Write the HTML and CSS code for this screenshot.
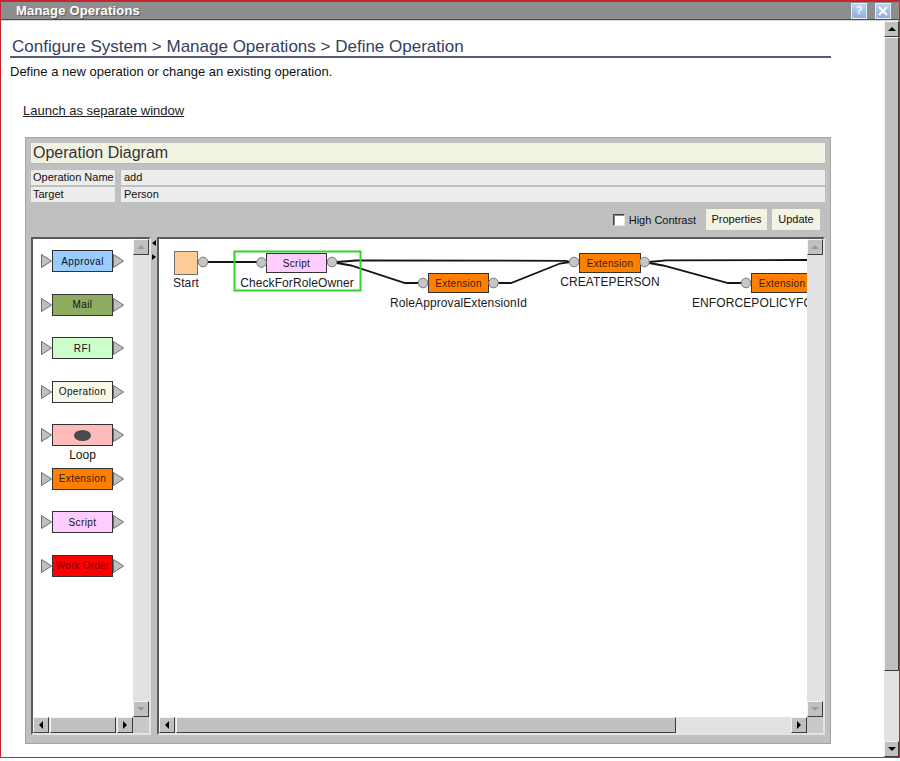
FILE: index.html
```html
<!DOCTYPE html>
<html>
<head>
<meta charset="utf-8">
<title>Manage Operations</title>
<link rel="stylesheet" href="styles.css">
</head>
<body>
<div class="window">
  <div class="titlebar">
    <span class="title">Manage Operations</span>
    <div class="tb-buttons">
      <span class="tb-btn">?</span>
      <span class="tb-btn"><svg width="10" height="10" viewBox="0 0 10 10"><path d="M1 1L9 9M9 1L1 9" stroke="#fff" stroke-width="2"/></svg></span>
    </div>
  </div>
  <div class="client">
    <div class="page">
      <h1 class="crumb">Configure System &gt; Manage Operations &gt; Define Operation</h1>
      <p class="desc">Define a new operation or change an existing operation.</p>
      <div class="launch-row"><a class="launch" href="#">Launch as separate window</a></div>
      <div class="applet">
        <div class="applet-title">Operation Diagram</div>
        <div class="prop-row"><div class="prop-label">Operation Name</div><div class="prop-value">add</div></div>
        <div class="prop-row gap2"><div class="prop-label">Target</div><div class="prop-value">Person</div></div>
        <div class="toolbar">
          <label class="hc"><span class="checkbox"></span>High Contrast</label>
          <span class="btn w61">Properties</span>
          <span class="btn w48">Update</span>
        </div>
        <div class="split">
          <div class="frame palette-frame">
            <div class="frame-body">
              <div class="view palette">
                <div class="pslot"><div class="pnode"><svg class="tri" width="11" height="14" viewBox="0 0 11 14"><path d="M0.5 0.5L10.5 7L0.5 13.5Z"/></svg><div class="pbox c-approval">Approval</div><svg class="tri" width="11" height="14" viewBox="0 0 11 14"><path d="M0.5 0.5L10.5 7L0.5 13.5Z"/></svg></div></div>
                <div class="pslot"><div class="pnode"><svg class="tri" width="11" height="14" viewBox="0 0 11 14"><path d="M0.5 0.5L10.5 7L0.5 13.5Z"/></svg><div class="pbox c-mail">Mail</div><svg class="tri" width="11" height="14" viewBox="0 0 11 14"><path d="M0.5 0.5L10.5 7L0.5 13.5Z"/></svg></div></div>
                <div class="pslot"><div class="pnode"><svg class="tri" width="11" height="14" viewBox="0 0 11 14"><path d="M0.5 0.5L10.5 7L0.5 13.5Z"/></svg><div class="pbox c-rfi">RFI</div><svg class="tri" width="11" height="14" viewBox="0 0 11 14"><path d="M0.5 0.5L10.5 7L0.5 13.5Z"/></svg></div></div>
                <div class="pslot"><div class="pnode"><svg class="tri" width="11" height="14" viewBox="0 0 11 14"><path d="M0.5 0.5L10.5 7L0.5 13.5Z"/></svg><div class="pbox c-operation">Operation</div><svg class="tri" width="11" height="14" viewBox="0 0 11 14"><path d="M0.5 0.5L10.5 7L0.5 13.5Z"/></svg></div></div>
                <div class="pslot"><div class="pnode"><svg class="tri" width="11" height="14" viewBox="0 0 11 14"><path d="M0.5 0.5L10.5 7L0.5 13.5Z"/></svg><div class="pbox c-loop"><span class="loop-dot"></span></div><svg class="tri" width="11" height="14" viewBox="0 0 11 14"><path d="M0.5 0.5L10.5 7L0.5 13.5Z"/></svg></div><div class="loop-label">Loop</div></div>
                <div class="pslot"><div class="pnode"><svg class="tri" width="11" height="14" viewBox="0 0 11 14"><path d="M0.5 0.5L10.5 7L0.5 13.5Z"/></svg><div class="pbox c-extension">Extension</div><svg class="tri" width="11" height="14" viewBox="0 0 11 14"><path d="M0.5 0.5L10.5 7L0.5 13.5Z"/></svg></div></div>
                <div class="pslot"><div class="pnode"><svg class="tri" width="11" height="14" viewBox="0 0 11 14"><path d="M0.5 0.5L10.5 7L0.5 13.5Z"/></svg><div class="pbox c-script">Script</div><svg class="tri" width="11" height="14" viewBox="0 0 11 14"><path d="M0.5 0.5L10.5 7L0.5 13.5Z"/></svg></div></div>
                <div class="pslot"><div class="pnode"><svg class="tri" width="11" height="14" viewBox="0 0 11 14"><path d="M0.5 0.5L10.5 7L0.5 13.5Z"/></svg><div class="pbox c-workorder">Work Order</div><svg class="tri" width="11" height="14" viewBox="0 0 11 14"><path d="M0.5 0.5L10.5 7L0.5 13.5Z"/></svg></div></div>
              </div>
              <div class="sbv">
                <div class="sbbtn"><span class="arr up dis"></span></div>
                <div class="track"></div>
                <div class="sbbtn"><span class="arr down dis"></span></div>
              </div>
            </div>
            <div class="frame-foot">
              <div class="sbh">
                <div class="sbbtn"><span class="arr left"></span></div>
                <div class="track h"><div class="thumb pal-thumb"></div></div>
                <div class="sbbtn"><span class="arr right"></span></div>
              </div>
              <div class="corner"></div>
            </div>
          </div>
          <div class="divider">
            <span class="darr dl"></span>
            <span class="darr dr"></span>
          </div>
          <div class="frame diagram-frame">
            <div class="frame-body">
              <div class="view canvas">
                <svg class="diagram" width="648" height="478" viewBox="159 238 648 478">
                  <g class="wires">
                    <path d="M208 261H257"/>
                    <path d="M337 261L356 259.5L566 259.8L570 261"/>
                    <path d="M337 262L351 264.5L405 282H419"/>
                    <path d="M498 282H511L560 262.5L570 261"/>
                    <path d="M649 261L666 259.3L808 259"/>
                    <path d="M649 262L663 264.5L728 282H742"/>
                  </g>
                  <rect class="sel" x="234.5" y="250.5" width="126" height="39"/>
                  <rect class="n-start" x="174.5" y="250.5" width="23" height="23"/>
                  <rect class="node n-script" x="266.5" y="252.5" width="60" height="19"/>
                  <rect class="node n-ext" x="428.5" y="272.5" width="60" height="19"/>
                  <rect class="node n-ext" x="579.5" y="252.5" width="61" height="19"/>
                  <rect class="node n-ext" x="751.5" y="272.5" width="61" height="19"/>
                  <g class="ports">
                    <circle cx="203" cy="261" r="4.8"/>
                    <circle cx="261.5" cy="261.5" r="4.8"/>
                    <circle cx="332" cy="261" r="4.8"/>
                    <circle cx="423" cy="282" r="4.8"/>
                    <circle cx="493.5" cy="282" r="4.8"/>
                    <circle cx="574" cy="261" r="4.8"/>
                    <circle cx="644.5" cy="261" r="4.8"/>
                    <circle cx="746" cy="282" r="4.8"/>
                  </g>
                  <text class="ntext" x="296.5" y="265.5">Script</text>
                  <text class="ntext ext" x="458.5" y="285.5">Extension</text>
                  <text class="ntext ext" x="610" y="265.5">Extension</text>
                  <text class="ntext ext" x="782" y="285.5">Extension</text>
                  <text class="lbl" x="186" y="286">Start</text>
                  <text class="lbl" x="297" y="286">CheckForRoleOwner</text>
                  <text class="lbl" x="458.5" y="306">RoleApprovalExtensionId</text>
                  <text class="lbl" x="610" y="285">CREATEPERSON</text>
                  <text class="lbl start" x="692" y="306">ENFORCEPOLICYFORPERSON</text>
                </svg>
              </div>
              <div class="sbv">
                <div class="sbbtn"><span class="arr up dis"></span></div>
                <div class="track"></div>
                <div class="sbbtn"><span class="arr down dis"></span></div>
              </div>
            </div>
            <div class="frame-foot">
              <div class="sbh">
                <div class="sbbtn"><span class="arr left"></span></div>
                <div class="track h"><div class="thumb dia-thumb"></div></div>
                <div class="sbbtn"><span class="arr right"></span></div>
              </div>
              <div class="corner"></div>
            </div>
          </div>
        </div>
      </div>
    </div>
    <div class="sbv page-sb">
      <div class="sbbtn"><span class="arr up"></span></div>
      <div class="track"><div class="thumb page-thumb"></div></div>
      <div class="sbbtn"><span class="arr down"></span></div>
    </div>
  </div>
</div>
</body>
</html>
```

FILE: styles.css
```css
* { box-sizing: border-box; }
html, body { margin: 0; padding: 0; background: #fff; }
body {
  width: 900px;
  height: 761px;
  overflow: hidden;
  font-family: "Liberation Sans", Arial, sans-serif;
  color: #111;
}

.window {
  width: 900px;
  height: 758px;
  border: 1px solid #c4262e;
  border-top-width: 2px;
  display: flex;
  flex-direction: column;
}

.titlebar {
  flex: none;
  height: 18px;
  background: #8d8d8d;
  border-bottom: 1px solid #4c4c4c;
  display: flex;
  align-items: center;
  justify-content: space-between;
  padding: 0 8px 0 15px;
}
.title {
  color: #fff;
  font-weight: bold;
  font-size: 13px;
  letter-spacing: 0.2px;
  text-shadow: 1px 1px 0 #5c5c5c;
}
.tb-buttons { display: flex; gap: 8px; }
.tb-btn {
  width: 16px;
  height: 16px;
  background: linear-gradient(#bcd4f0, #8eaedb);
  border: 1px solid #e6eef8;
  display: flex;
  align-items: center;
  justify-content: center;
  color: #fff;
  font-weight: bold;
  font-size: 11px;
  line-height: 1;
}

.client {
  flex: 1;
  min-height: 0;
  display: flex;
  border-top: 1px solid #d6d6d6;
}
.page {
  flex: 1;
  min-width: 0;
  overflow: hidden;
  padding: 16px 0 0 9px;
}

.crumb {
  margin: 0;
  width: 821px;
  height: 21px;
  padding-left: 2px;
  font-size: 17px;
  font-weight: normal;
  line-height: 19px;
  color: #34405f;
  border-bottom: 2px solid #555b78;
}
.desc {
  margin: 6px 0 0 0;
  font-size: 13px;
  line-height: 15px;
  color: #111;
}
.launch-row { margin: 23px 0 0 13px; line-height: 15px; }
.launch {
  font-size: 13px;
  color: #222;
  text-decoration: underline;
}

/* applet */
.applet {
  margin: 19px 0 0 15px;
  width: 806px;
  height: 607px;
  background: #c0c0c0;
  border: 1px solid #a4a4a4;
  padding: 5px 5px 7px 5px;
  display: flex;
  flex-direction: column;
  font-family: "Liberation Sans", Tahoma, sans-serif;
}
.applet-title {
  height: 21px;
  background: #f3f3e3;
  border-bottom: 1px solid #b8b8b0;
  font-size: 16px;
  line-height: 20px;
  padding-left: 2px;
  color: #333;
}
.prop-row {
  margin-top: 6px;
  height: 15px;
  display: flex;
  gap: 6px;
  font-size: 11px;
  line-height: 15px;
  color: #111;
}
.prop-row.gap2 { margin-top: 2px; }
.prop-label { width: 84px; background: #ececec; padding-left: 2px; }
.prop-value { flex: 1; background: #ececec; padding-left: 3px; }

.toolbar {
  margin-top: 7px;
  height: 21px;
  display: flex;
  justify-content: flex-end;
  align-items: center;
  padding-right: 5px;
  font-size: 11px;
  color: #111;
}
.hc {
  display: flex;
  align-items: center;
  gap: 4px;
  margin-right: 10px;
}
.checkbox {
  width: 12px;
  height: 12px;
  background: #fff;
  border: 1px solid;
  border-color: #404040 #e6e6e6 #e6e6e6 #404040;
  box-shadow: inset 1px 1px 0 #8a8a8a;
}
.btn {
  height: 21px;
  line-height: 21px;
  text-align: center;
  background: #f3f3e3;
}
.btn.w61 { width: 61px; margin-right: 5px; }
.btn.w48 { width: 48px; }

.split {
  margin-top: 7px;
  height: 498px;
  display: flex;
}
.frame {
  display: flex;
  flex-direction: column;
  border: 2px solid;
  border-color: #5a5a5a #e4e4e4 #e4e4e4 #5a5a5a;
  background: #fff;
}
.palette-frame { width: 120px; }
.diagram-frame { flex: 1; }
.frame-body { flex: 1; min-height: 0; display: flex; }
.view { flex: 1; min-width: 0; overflow: hidden; background: #fff; }
.frame-foot { height: 16px; display: flex; }
.corner { width: 16px; background: #c8c8c8; }

.divider {
  width: 6px;
  display: flex;
  flex-direction: column;
  align-items: center;
  padding-top: 3px;
  gap: 8px;
}
.darr { width: 0; height: 0; border-top: 3px solid transparent; border-bottom: 3px solid transparent; }
.darr.dl { border-right: 4px solid #000; }
.darr.dr { border-left: 4px solid #000; }

/* scrollbars */
.sbv {
  width: 16px;
  flex: none;
  display: flex;
  flex-direction: column;
  background: #e2e2e2;
}
.sbh {
  flex: 1;
  display: flex;
  background: #e2e2e2;
}
.track { flex: 1; background: #e2e2e2; }
.track.h { display: flex; padding-left: 1px; }
.sbbtn {
  width: 16px;
  height: 16px;
  flex: none;
  background: #c0c0c0;
  border: 1px solid;
  border-color: #f4f4f4 #3c3c3c #3c3c3c #f4f4f4;
  display: flex;
  align-items: center;
  justify-content: center;
}
.thumb {
  background: #c0c0c0;
  border: 1px solid;
  border-color: #f4f4f4 #3c3c3c #3c3c3c #f4f4f4;
}
.pal-thumb { width: 66px; }
.dia-thumb { width: 500px; }
.page-sb { width: 15px; }
.page-sb .sbbtn { width: 15px; }
.page-thumb { height: 634px; }

.arr { width: 0; height: 0; }
.arr.up { border-left: 4px solid transparent; border-right: 4px solid transparent; border-bottom: 4px solid #000; }
.arr.down { border-left: 4px solid transparent; border-right: 4px solid transparent; border-top: 4px solid #000; }
.arr.left { border-top: 4px solid transparent; border-bottom: 4px solid transparent; border-right: 4px solid #000; }
.arr.right { border-top: 4px solid transparent; border-bottom: 4px solid transparent; border-left: 4px solid #000; }
.arr.up.dis { border-bottom-color: #9a9a9a; }
.arr.down.dis { border-top-color: #9a9a9a; }

/* palette */
.palette {
  padding: 11px 0 0 8px;
  display: flex;
  flex-direction: column;
}
.pslot { height: 43.5px; flex: none; }
.pnode { display: flex; align-items: center; height: 22px; }
.tri { display: block; flex: none; }
.tri path { fill: #c0c0c0; stroke: #6c6c6c; stroke-width: 1; }
.pbox {
  width: 61px;
  height: 22px;
  flex: none;
  border: 1px solid #333;
  display: flex;
  align-items: center;
  justify-content: center;
  font-family: "Liberation Sans", Arial, sans-serif;
  font-size: 10px;
  letter-spacing: 0.4px;
  color: #101020;
}
.c-approval { background: #99ccff; }
.c-mail { background: #8fab60; }
.c-rfi { background: #ccffcc; }
.c-operation { background: #f8f8e8; }
.c-loop { background: #ffbbbb; }
.c-extension { background: #ff8000; color: #3a1a00; }
.c-script { background: #ffccff; }
.c-workorder { background: #ff0000; color: #7a0000; letter-spacing: 0.2px; }
.loop-dot {
  width: 17px;
  height: 11px;
  border-radius: 50%;
  background: #4a4a4a;
}
.loop-label {
  width: 83px;
  text-align: center;
  font-size: 12px;
  line-height: 13px;
  margin-top: 3px;
  color: #111;
}

/* diagram */
.diagram { display: block; }
.wires path { fill: none; stroke: #141414; stroke-width: 1.8; }
.sel { fill: none; stroke: #2fd52f; stroke-width: 2; }
.n-start { fill: #ffcc99; stroke: #707070; stroke-width: 1; }
.node { stroke: #333; stroke-width: 1; }
.n-script { fill: #ffccff; }
.n-ext { fill: #ff8000; }
.ports circle { fill: #c6c6c6; stroke: #7a7a7a; stroke-width: 1; }
.ntext {
  font-family: "Liberation Sans", Arial, sans-serif;
  font-size: 10px;
  letter-spacing: 0.3px;
  text-anchor: middle;
  fill: #101020;
}
.ntext.ext { fill: #3a1a00; }
.lbl {
  font-family: "Liberation Sans", Arial, sans-serif;
  font-size: 12px;
  letter-spacing: 0.1px;
  text-anchor: middle;
  fill: #1a1a1a;
}
.lbl.start { text-anchor: start; }
```
